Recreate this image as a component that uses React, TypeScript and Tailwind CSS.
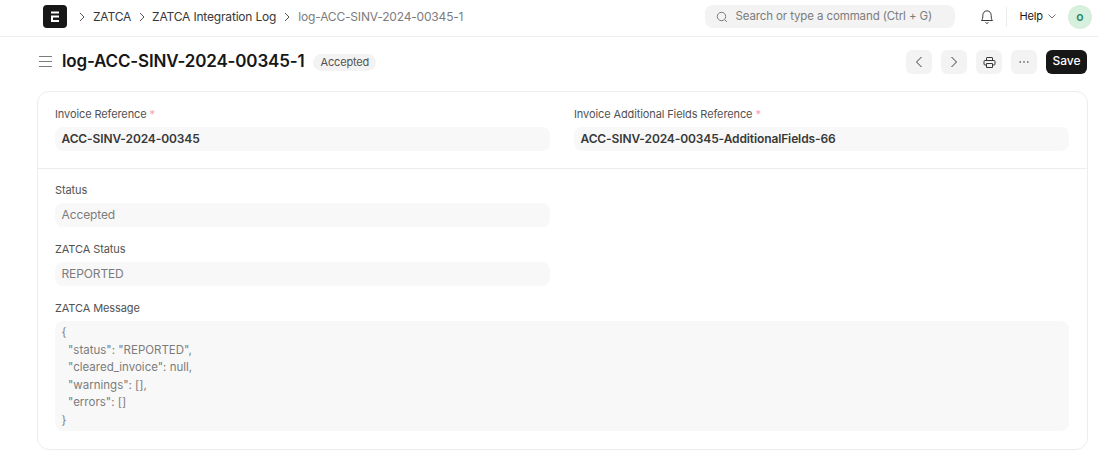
import React from "react";

function Chevron({ className = "" }: { className?: string }) {
  return (
    <svg width="8" height="10" viewBox="0 0 8 10" fill="none" stroke="#525252" strokeWidth="1" className={className}>
      <path d="M2 1 L6 5 L2 9" />
    </svg>
  );
}

function IconButton({ children }: { children: React.ReactNode }) {
  return (
    <button className="w-[26px] h-6 rounded-md bg-[#f3f3f3] flex items-center justify-center">{children}</button>
  );
}

function Field({ label, required, value, bold, muted }: { label: string; required?: boolean; value: string; bold?: boolean; muted?: boolean }) {
  return (
    <div className="flex flex-col">
      <div className="text-[11px] tracking-[-0.01em] leading-[14px] text-[#525252] mb-[6px]">
        {label}
        {required && <span className="text-[#f5a3a3]"> *</span>}
      </div>
      <div
        className={`h-6 rounded-lg bg-[#f8f8f8] px-[6.5px] flex items-center text-xs tracking-[-0.01em] ${bold ? "font-semibold text-[#383838] pb-[1px]" : ""} ${muted ? "text-[#7c7c7c]" : ""}`}
      >
        {value}
      </div>
    </div>
  );
}

export default function App() {
  return (
    <div className="w-[1098px] h-[466px] bg-white overflow-hidden font-['Inter',sans-serif]">
      <header className="h-[37px] pb-[3px] border-b border-[#ededed] flex items-center pl-[43px] pr-[6px]">
        <div className="w-6 h-[23px] rounded-[4px] bg-[#171717] flex items-center justify-center">
          <svg width="10" height="12" viewBox="0 0 10 12" fill="white">
            <path d="M1 0.5 H9 V2.5 H1 Z M1 4.5 H9 V6.5 H3 V9 H9 V11 H1 Z" />
          </svg>
        </div>
        <nav className="flex items-center text-xs tracking-[-0.015em] ml-[11px]">
          <Chevron />
          <span className="ml-[7px] text-[#383838]">ZATCA</span>
          <Chevron className="ml-[7px]" />
          <span className="ml-[6px] text-[#383838]">ZATCA Integration Log</span>
          <Chevron className="ml-[7px]" />
          <span className="ml-[7px] text-[#7c7c7c]">log-ACC-SINV-2024-00345-1</span>
        </nav>
        <div className="ml-auto mr-[-2px] w-[250px] h-[23px] rounded-lg bg-[#f3f3f3] flex items-center pl-[11px] text-[11.5px] tracking-[-0.01em] text-[#7c7c7c]">
          <svg width="12" height="12" viewBox="0 0 12 12" fill="none" stroke="#7c7c7c" strokeWidth="1" className="mr-[7px]">
            <circle cx="5.5" cy="5.5" r="4.2" />
            <path d="M8.6 8.6 L11 11" />
          </svg>
          Search or type a command (Ctrl + G)
        </div>
        <svg width="14" height="16" viewBox="0 0 14 16" fill="none" stroke="#383838" strokeWidth="1" className="ml-[27px]">
          <path d="M1.5 11.5 C2.8 10.2 2.8 8.5 2.8 6.5 C2.8 3.8 4.6 1.8 7 1.8 C9.4 1.8 11.2 3.8 11.2 6.5 C11.2 8.5 11.2 10.2 12.5 11.5 Z" />
          <path d="M5.5 13.5 C6 14.5 8 14.5 8.5 13.5" />
        </svg>
        <div className="w-px h-5 bg-[#ededed] ml-[12px]" />
        <span className="ml-3 text-[11px] tracking-[-0.01em] text-[#171717]">Help</span>
        <svg width="8" height="5" viewBox="0 0 8 5" fill="none" stroke="#525252" strokeWidth="0.8" className="ml-[5px]">
          <path d="M0.5 0.5 L4 4 L7.5 0.5" />
        </svg>
        <div className="ml-[12px] w-6 h-6 rounded-full bg-[#d6f0dd] flex items-center justify-center text-xs font-semibold text-[#2a8a6a]">
          o
        </div>
      </header>

      <div className="h-[50px] mb-1 flex items-center pl-[39px] pr-[11px]">
        <svg width="13" height="12" viewBox="0 0 13 12" fill="none" stroke="#7c7c7c" strokeWidth="1">
          <path d="M0 0.5 H13 M0 5.5 H13 M0 10.5 H13" />
        </svg>
        <h1 className="ml-[10px] text-[17px] tracking-[-0.01em] font-semibold text-[#171717]">log-ACC-SINV-2024-00345-1</h1>
        <span className="ml-[9px] h-[17px] px-[7px] rounded-full bg-[#f3f3f3] text-[11px] tracking-[-0.015em] text-[#525252] flex items-center">Accepted</span>
        <div className="ml-auto flex items-center gap-[9px]">
          <IconButton>
            <svg width="8" height="12" viewBox="0 0 8 12" fill="none" stroke="#383838" strokeWidth="1"><path d="M6.5 1 L1.5 6 L6.5 11" /></svg>
          </IconButton>
          <IconButton>
            <svg width="8" height="12" viewBox="0 0 8 12" fill="none" stroke="#383838" strokeWidth="1"><path d="M1.5 1 L6.5 6 L1.5 11" /></svg>
          </IconButton>
          <IconButton>
            <svg width="13" height="11" viewBox="0 0 13 11" fill="none" stroke="#383838" strokeWidth="1">
              <path d="M3.5 3.5 V1 Q3.5 0.5 4 0.5 H9 Q9.5 0.5 9.5 1 V3.5 M3.5 8 H2 Q1 8 1 7 V4.5 Q1 3.5 2 3.5 H11 Q12 3.5 12 4.5 V7 Q12 8 11 8 H9.5 M3.5 6.5 H9.5 V10.5 H3.5 Z" />
            </svg>
          </IconButton>
          <IconButton>
            <svg width="10" height="2" viewBox="0 0 10 2" fill="#383838"><circle cx="1.2" cy="1" r="0.8" /><circle cx="5" cy="1" r="0.8" /><circle cx="8.8" cy="1" r="0.8" /></svg>
          </IconButton>
          <button className="w-[41px] h-6 pb-[2px] rounded-md bg-[#171717] text-white text-xs font-medium">Save</button>
        </div>
      </div>

      <main className="mx-[37px] w-[1051px] h-[359px] border border-[#ededed] rounded-xl">
        <section className="grid grid-cols-2 gap-x-6 pl-[17px] pr-[18px] pt-[15px] h-[77px] border-b border-[#ededed]">
          <Field label="Invoice Reference" required value="ACC-SINV-2024-00345" bold />
          <Field label="Invoice Additional Fields Reference" required value="ACC-SINV-2024-00345-AdditionalFields-66" bold />
        </section>
        <section className="pl-[17px] pr-[18px] pt-[14px] flex flex-col gap-[15px]">
          <div className="w-[495px]"><Field label="Status" value="Accepted" muted /></div>
          <div className="w-[495px]"><Field label="ZATCA Status" value="REPORTED" muted /></div>
          <div className="flex flex-col">
            <div className="text-[11px] tracking-[-0.01em] leading-[14px] text-[#525252] mb-[6px]">ZATCA Message</div>
            <div className="h-[110px] rounded-lg bg-[#f8f8f8] px-[6.5px] pt-[3px] text-[11.5px] leading-[17.5px] text-[#7c7c7c] whitespace-pre">
              {`{\n  "status": "REPORTED",\n  "cleared_invoice": null,\n  "warnings": [],\n  "errors": []\n}`}
            </div>
          </div>
        </section>
      </main>
    </div>
  );
}
